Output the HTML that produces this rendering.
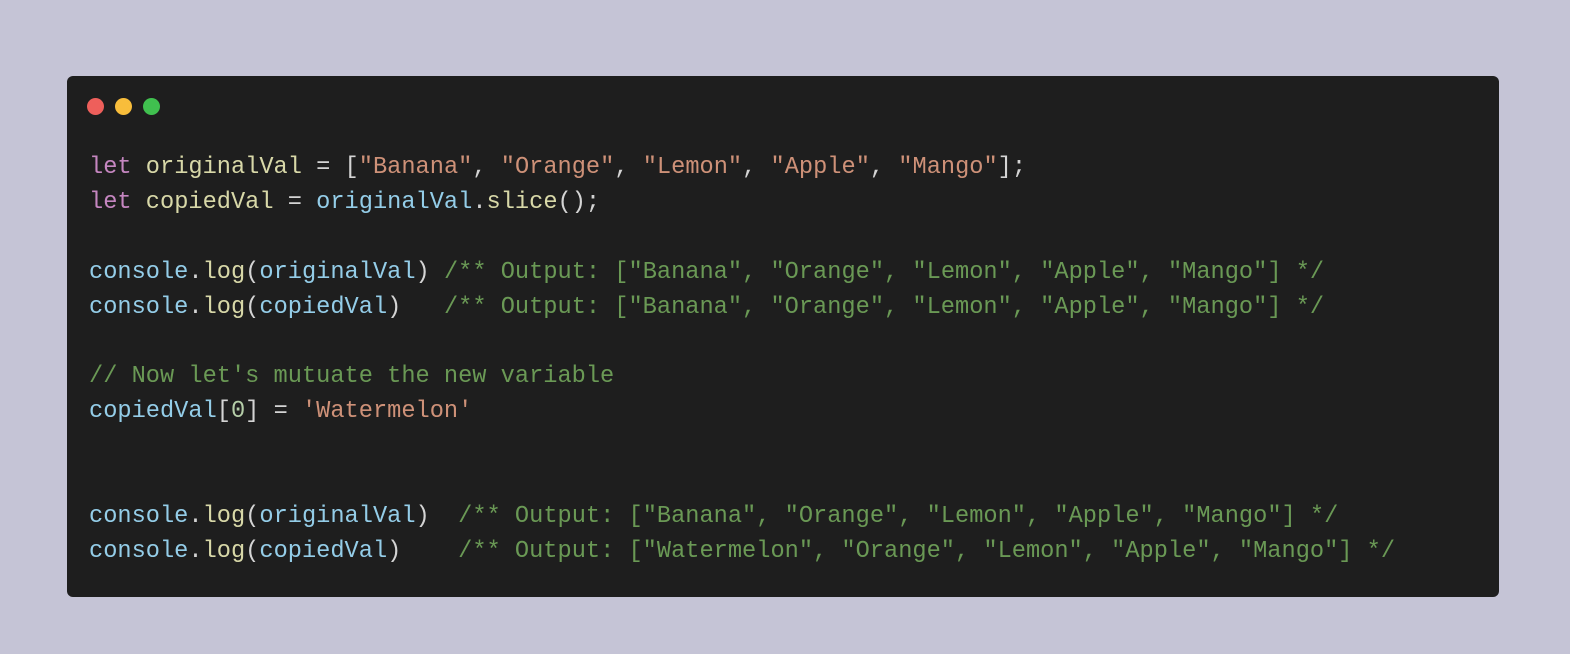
<!DOCTYPE html>
<html><head><meta charset="utf-8"><style>
html,body{margin:0;padding:0;}
body{width:1570px;height:654px;background:#c5c4d6;position:relative;overflow:hidden;}
.card{position:absolute;left:67px;top:76px;width:1432px;height:521px;background:#1e1e1e;border-radius:6px;}
.dot{position:absolute;top:98px;width:17px;height:17px;border-radius:50%;}
pre{position:absolute;left:89px;top:151px;margin:0;font-family:"Liberation Mono","DejaVu Sans Mono",monospace;font-size:23.67px;line-height:34.9px;color:#d4d4d4;white-space:pre;}
.k{color:#c586c0}.d{color:#d8d8a8}.v{color:#94cde8}.s{color:#ce9178}.f{color:#d8d8a8}.c{color:#6a9955}.n{color:#b5cea8}
</style></head><body>
<div class="card"></div>
<div class="dot" style="left:87px;background:#ee5f5b"></div>
<div class="dot" style="left:115px;background:#f8bd3b"></div>
<div class="dot" style="left:143px;background:#40c04f"></div>
<pre><span class="k">let</span> <span class="d">originalVal</span> = [<span class="s">"Banana"</span>, <span class="s">"Orange"</span>, <span class="s">"Lemon"</span>, <span class="s">"Apple"</span>, <span class="s">"Mango"</span>];
<span class="k">let</span> <span class="d">copiedVal</span> = <span class="v">originalVal</span>.<span class="f">slice</span>();

<span class="v">console</span>.<span class="f">log</span>(<span class="v">originalVal</span>) <span class="c">/** Output: ["Banana", "Orange", "Lemon", "Apple", "Mango"] */</span>
<span class="v">console</span>.<span class="f">log</span>(<span class="v">copiedVal</span>)   <span class="c">/** Output: ["Banana", "Orange", "Lemon", "Apple", "Mango"] */</span>

<span class="c">// Now let's mutuate the new variable</span>
<span class="v">copiedVal</span>[<span class="n">0</span>] = <span class="s">'Watermelon'</span>


<span class="v">console</span>.<span class="f">log</span>(<span class="v">originalVal</span>)  <span class="c">/** Output: ["Banana", "Orange", "Lemon", "Apple", "Mango"] */</span>
<span class="v">console</span>.<span class="f">log</span>(<span class="v">copiedVal</span>)    <span class="c">/** Output: ["Watermelon", "Orange", "Lemon", "Apple", "Mango"] */</span></pre>
</body></html>
